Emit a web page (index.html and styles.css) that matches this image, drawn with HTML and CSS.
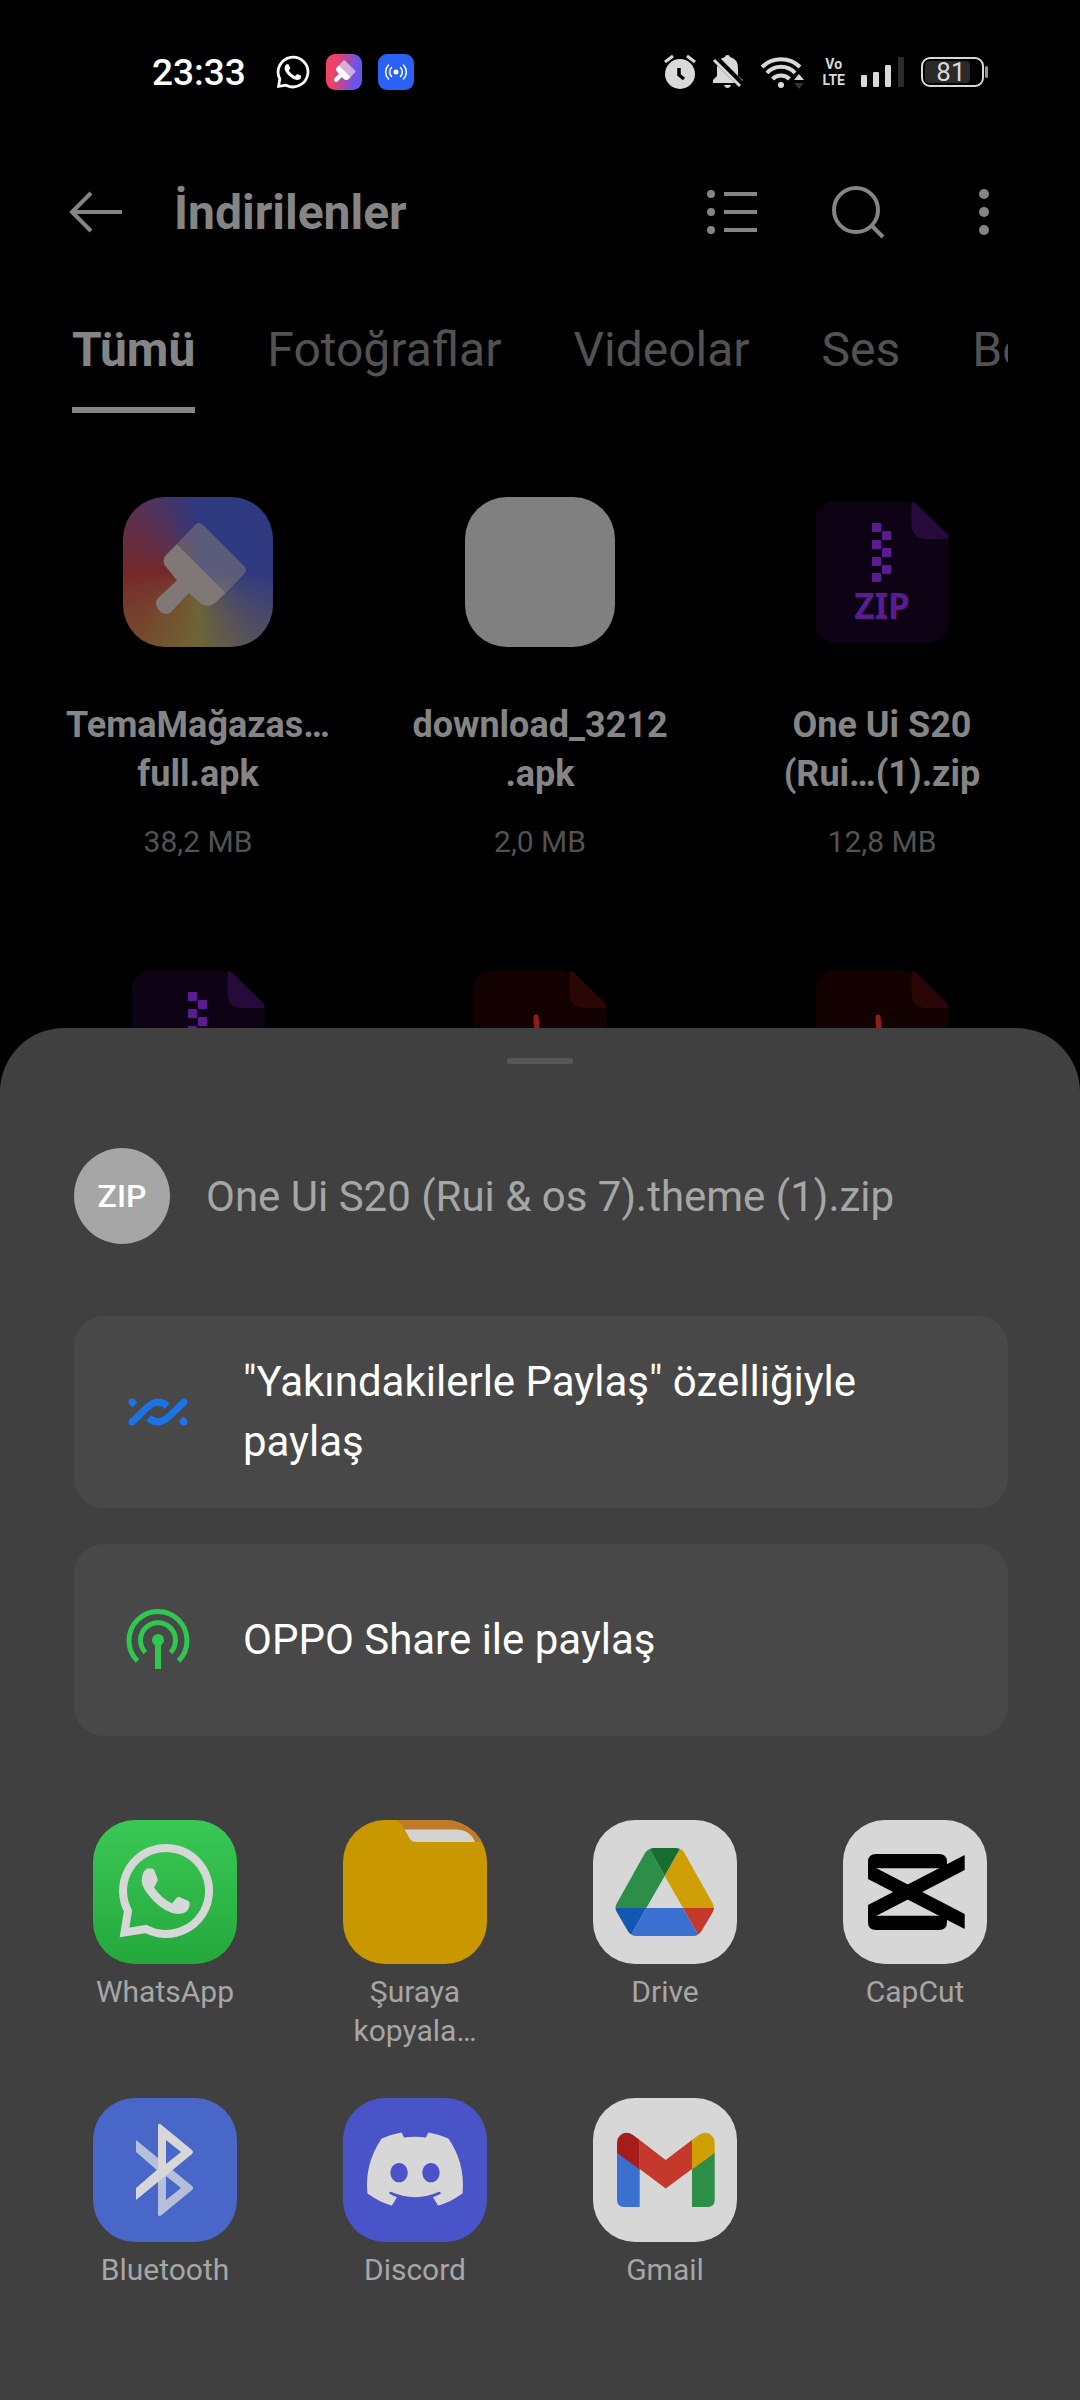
FILE: index.html
```html
<!DOCTYPE html>
<html lang="tr">

<head>
    <meta charset="UTF-8">
    <meta name="viewport" content="width=device-width, initial-scale=1.0">
    <title>İndirilenler</title>
    <link rel="stylesheet" href="styles.css">
</head>

<body>

    <!-- Shared icon shapes -->
    <svg class="sprite" aria-hidden="true">
        <symbol id="whatsapp" viewBox="24 22 98 98">
            <path d="M53 109A43 43 0 1 0 35 91L31.500 112.500Z" fill="none" stroke="currentColor" stroke-width="8" />
            <path d="M54 48.500h5q1.500 0 2 1.500l3.500 8.500q.7 2-.5 3.500l-3 5.500q7 10.500 18 16l4.500-5.500q1.500-1.500 3.500-.7l8.500 3.700q1.500.8 1.200 2.500q-.5 10.500-12 10.500q-12-1-24-13q-12-13-12-19.500q0-10 5.300-13z" fill="currentColor" />
        </symbol>
        <symbol id="brush" viewBox="0 0 150 150">
            <path d="M54 47L72 28q4-4 8 0L121 69q4 4 0 8L102.700 96z" fill="currentColor" opacity=".55" />
            <path d="M54 47L44 57q-7 7 0 14L54 83.500L35 101q-4 5 0 11q6 8 13 3L66 96L77 106q8 6 15 0L102.700 96z" fill="currentColor" />
        </symbol>
        <symbol id="zip-file" viewBox="0 0 150 150">
            <path d="M24 4.500H99.500L141.500 41V131q0 15-15 15H24q-15 0-15-15V19.500q0-15 15-15z" fill="#0d0314" />
            <path d="M104.500 5q3 0 5 2L139 36q2.500 2.500 2.500 6H120q-15.500 0-15.500-15.500z" fill="#270a3c" />
            <g fill="#5b1b93">
                <rect x="65" y="26" width="9" height="9" rx="1" />
                <rect x="75" y="34" width="9" height="9" rx="1" />
                <rect x="65" y="43" width="9" height="9" rx="1" />
                <rect x="75" y="51" width="9" height="9" rx="1" />
                <rect x="65" y="60" width="9" height="9" rx="1" />
                <rect x="75" y="68" width="9" height="9" rx="1" />
                <rect x="65" y="76" width="9" height="9" rx="1" />
            </g>
        </symbol>
        <symbol id="pdf-file" viewBox="0 0 150 150">
            <path d="M24 4.500H99.500L141.500 41V131q0 15-15 15H24q-15 0-15-15V19.500q0-15 15-15z" fill="#140202" />
            <path d="M104.500 5q3 0 5 2L139 36q2.500 2.500 2.500 6H120q-15.500 0-15.500-15.500z" fill="#2b0606" />
            <path d="M71 51C70 80 90 98 108 100C90 92 60 96 45 112C62 104 76 80 71 51z" fill="none" stroke="#8f1d1d" stroke-width="5" stroke-linejoin="round" />
        </symbol>
    </svg>

    <div class="status-bar">
        <div class="status-left">
            <span class="clock">23:33</span>
            <svg class="status-whatsapp"><use href="#whatsapp" /></svg>
            <span class="mini-app theme"><svg><use href="#brush" /></svg></span>
            <span class="mini-app cast">
                <svg viewBox="0 0 36 36" fill="none" stroke="#fff" stroke-width="1.500" stroke-linecap="round">
                    <circle cx="18" cy="18" r="2.500" fill="#fff" stroke="none" />
                    <path d="M13.500 13.500a6.500 6.500 0 0 0 0 9M22.500 13.500a6.500 6.500 0 0 1 0 9M10.500 11a10 10 0 0 0 0 14M25.500 11a10 10 0 0 1 0 14" />
                </svg>
            </span>
        </div>
        <div class="status-right">
            <svg width="32" height="36" viewBox="0 0 32 36">
                <circle cx="16" cy="20" r="15" fill="currentColor" />
                <path d="M1 8L9 2M31 8L23 2" stroke="currentColor" stroke-width="3" />
                <path d="M15 14v7l5 4" fill="none" stroke="#000" stroke-width="3.500" />
            </svg>
            <svg width="32" height="36" viewBox="0 0 32 36">
                <path d="M1 29v-3l4-4v-8q0-9 8-11q0-2 2.500-2t2.500 2q8 2 8 11v8l5 4v3z" fill="currentColor" />
                <path d="M12 31h7q-1 3-3.500 3t-3.500-3z" fill="currentColor" />
                <path d="M4 5L30 31" stroke="#000" stroke-width="7" />
                <path d="M2 6L28 32" stroke="currentColor" stroke-width="3" />
            </svg>
            <svg width="46" height="36" viewBox="0 0 46 36">
                <g fill="none" stroke="currentColor" stroke-width="4">
                    <path d="M2 13a27 27 0 0 1 38 0" />
                    <path d="M7 19a19 19 0 0 1 28 0" />
                    <path d="M12.500 25a12 12 0 0 1 17 0" />
                </g>
                <circle cx="21" cy="31" r="3" fill="currentColor" />
                <path d="M34 26l5-6 5 6z" fill="currentColor" />
                <path d="M34 29h10l-5 6z" fill="#333" />
            </svg>
            <span class="volte">Vo<br>LTE</span>
            <svg width="44" height="32" viewBox="0 0 44 32" fill="currentColor">
                <rect x="0" y="19" width="6" height="12" rx="1" />
                <rect x="12" y="16" width="6" height="15" rx="1" />
                <rect x="24" y="9" width="6" height="22" rx="1" />
                <rect x="37" y="1" width="6" height="30" rx="1" fill="#2a2a2a" />
            </svg>
            <span class="battery"><span class="battery-level">81</span></span>
        </div>
    </div>

    <header class="toolbar">
        <button type="button" aria-label="Geri">
            <svg width="54" height="44" viewBox="0 0 54 44" fill="none" stroke="currentColor" stroke-width="4">
                <path d="M53 22H4M22 3L3 22L22 41" />
            </svg>
        </button>
        <h1>İndirilenler</h1>
        <div class="toolbar-actions">
            <button type="button" aria-label="Liste görünümü">
                <svg width="52" height="48" viewBox="0 0 52 48" fill="currentColor">
                    <circle cx="5" cy="6" r="4" /><circle cx="5" cy="24" r="4" /><circle cx="5" cy="42" r="4" />
                    <path d="M18 4h33v4H18zM18 22h33v4H18zM18 40h33v4H18z" />
                </svg>
            </button>
            <button type="button" aria-label="Ara">
                <svg width="54" height="54" viewBox="0 0 54 54" fill="none" stroke="currentColor" stroke-width="4">
                    <circle cx="25" cy="25" r="22" /><path d="M40 40L52 52" />
                </svg>
            </button>
            <button type="button" aria-label="Diğer">
                <svg width="12" height="48" viewBox="0 0 12 48" fill="currentColor">
                    <circle cx="6" cy="6" r="5" /><circle cx="6" cy="24" r="5" /><circle cx="6" cy="42" r="5" />
                </svg>
            </button>
        </div>
    </header>

    <nav class="tabs">
        <button type="button" class="active">Tümü</button>
        <button type="button">Fotoğraflar</button>
        <button type="button">Videolar</button>
        <button type="button">Ses</button>
        <button type="button">Belgeler</button>
    </nav>

    <main class="files">
        <div class="file">
            <div class="file-icon theme"><svg><use href="#brush" /></svg></div>
            <p class="file-name">TemaMağazas…<br>full.apk</p>
            <p class="file-size">38,2 MB</p>
        </div>
        <div class="file">
            <div class="file-icon blank"></div>
            <p class="file-name">download_3212<br>.apk</p>
            <p class="file-size">2,0 MB</p>
        </div>
        <div class="file">
            <div class="file-icon"><svg><use href="#zip-file" /><text x="75" y="122" class="zip-text">ZIP</text></svg></div>
            <p class="file-name">One Ui S20<br>(Rui…(1).zip</p>
            <p class="file-size">12,8 MB</p>
        </div>
        <div class="file">
            <div class="file-icon"><svg><use href="#zip-file" /></svg></div>
        </div>
        <div class="file">
            <div class="file-icon"><svg><use href="#pdf-file" /></svg></div>
        </div>
        <div class="file">
            <div class="file-icon"><svg><use href="#pdf-file" /></svg></div>
        </div>
    </main>

    <!-- Share sheet -->
    <section class="sheet">
        <div class="handle"></div>
        <div class="sheet-header">
            <span class="file-type">ZIP</span>
            <h2>One Ui S20 (Rui &amp; os 7).theme (1).zip</h2>
        </div>

        <div class="share-options">
            <button type="button">
                <svg viewBox="-3 -19 66 66" fill="none" stroke="#1a73e8" stroke-width="7">
                    <path d="M4 24L19 9.500Q29.500-.5 39.500 8M56 4L41 18.500Q30.500 28.500 20.500 20M4 4l3 3M56 24l-3-3" />
                    <g fill="#1a73e8" stroke="none">
                        <circle cx="4" cy="4" r="3.500" /><circle cx="4" cy="24" r="3.500" />
                        <circle cx="56" cy="4" r="3.500" /><circle cx="56" cy="24" r="3.500" />
                    </g>
                </svg>
                <span>"Yakındakilerle Paylaş" özelliğiyle paylaş</span>
            </button>
            <button type="button">
                <svg viewBox="0 0 66 66" fill="none" stroke="#2fc750" stroke-width="5">
                    <path d="M12.500 54A29 29 0 1 1 53.500 54M20.500 45.500A17.500 17.500 0 1 1 45.500 45.500" />
                    <circle cx="33" cy="33" r="6" fill="#2fc750" stroke="none" />
                    <path d="M33 33V62" stroke-width="6" />
                </svg>
                <span>OPPO Share ile paylaş</span>
            </button>
        </div>

        <div class="apps">
            <button type="button">
                <span class="app-icon whatsapp"><svg viewBox="0 0 144 144"><use href="#whatsapp" x="24" y="22" width="98" height="98" /></svg></span>
                <span>WhatsApp</span>
            </button>
            <button type="button">
                <span class="app-icon folder">
                    <svg viewBox="0 0 144 144">
                        <path d="M52 0q5 1 8 7l7 12q2 3 6 3h71V0z" fill="#bd7b2b" />
                        <path d="M61.500 9.500H113q14 0 19 12.500H73q-4 0-6-3z" fill="#d3d2d0" />
                    </svg>
                </span>
                <span>Şuraya kopyala…</span>
            </button>
            <button type="button">
                <span class="app-icon">
                    <svg viewBox="0 0 144 144">
                        <path d="M56.700 29L71.700 56L53.300 88H22.500q0-3 1.500-5L52 33q2-3 4.700-4z" fill="#2d8f47" />
                        <path d="M56.700 29q2-1 4-1H83q2 0 4 1L71.700 56z" fill="#176e30" />
                        <path d="M87 29q3 1 4.500 4L119.500 83q1.500 2 1.500 5H90L71.700 56z" fill="#d09e05" />
                        <path d="M22.500 88H53.300L38.300 114.500q-2-1-3.500-3.500L24 92.500q-1.500-2-1.500-4.500z" fill="#1457b2" />
                        <path d="M53.300 88H90L105 114.500q-2 1.500-5 1.500H43.500q-3 0-5.200-1.500z" fill="#3a70cf" />
                        <path d="M90 88h31q0 2.500-1.500 4.500L108.500 111q-1.500 2.500-3.500 3.500z" fill="#c4392c" />
                    </svg>
                </span>
                <span>Drive</span>
            </button>
            <button type="button">
                <span class="app-icon">
                    <svg viewBox="0 0 144 144">
                        <path d="M25 59V46l9 2.500L121.700 94V109z" />
                        <path d="M25 85V98l9-2.500L121.700 50V35z" />
                        <path d="M25 52V42q0-8 8-8h63q8 0 8 8v6.300H25z" />
                        <path d="M25 92V102q0 8 8 8h63q8 0 8-8v-6.300H25z" />
                    </svg>
                </span>
                <span>CapCut</span>
            </button>
            <button type="button">
                <span class="app-icon bluetooth">
                    <svg viewBox="0 0 144 144" fill-rule="evenodd">
                        <path d="M65 117q1 2 3 .5L99 92q2-2 0-4L43 42V54L65 73zM73 102V78L88 90z" fill="#b5bfda" />
                        <path d="M65 27q1-2 3-.5L99 52q2 2 0 4L43 102V90L65 71zM73 42V66L88 54z" fill="#d7d7d7" />
                    </svg>
                </span>
                <span>Bluetooth</span>
            </button>
            <button type="button">
                <span class="app-icon discord">
                    <svg viewBox="0 0 144 144">
                        <path transform="translate(24 23) scale(4)" fill="#d7d7d7" d="M20.317 4.3698a19.7913 19.7913 0 00-4.8851-1.5152.0741.0741 0 00-.0785.0371c-.211.3753-.4447.8648-.6083 1.2495-1.8447-.2762-3.68-.2762-5.4868 0-.1636-.3933-.4058-.8742-.6177-1.2495a.077.077 0 00-.0785-.037 19.7363 19.7363 0 00-4.8852 1.515.0699.0699 0 00-.0321.0277C.5334 9.0458-.319 13.5799.0992 18.0578a.0824.0824 0 00.0312.0561c2.0528 1.5076 4.0413 2.4228 5.9929 3.0294a.0777.0777 0 00.0842-.0276c.4616-.6304.8731-1.2952 1.226-1.9942a.076.076 0 00-.0416-.1057c-.6528-.2476-1.2743-.5495-1.8722-.8923a.077.077 0 01-.0076-.1277c.1258-.0943.2517-.1923.3718-.2914a.0743.0743 0 01.0776-.0105c3.9278 1.7933 8.18 1.7933 12.0614 0a.0739.0739 0 01.0785.0095c.1202.099.246.1981.3728.2924a.077.077 0 01-.0066.1276 12.2986 12.2986 0 01-1.873.8914.0766.0766 0 00-.0407.1067c.3604.698.7719 1.3628 1.225 1.9932a.076.076 0 00.0842.0286c1.961-.6067 3.9495-1.5219 6.0023-3.0294a.077.077 0 00.0313-.0552c.5004-5.177-.8382-9.6739-3.5485-13.6604a.061.061 0 00-.0312-.0286zM8.02 15.3312c-1.1825 0-2.1569-1.0857-2.1569-2.419 0-1.3332.9555-2.4189 2.157-2.4189 1.2108 0 2.1757 1.0952 2.1568 2.419 0 1.3332-.9555 2.4189-2.1569 2.4189zm7.9748 0c-1.1825 0-2.1569-1.0857-2.1569-2.419 0-1.3332.9554-2.4189 2.1569-2.4189 1.2108 0 2.1757 1.0952 2.1568 2.419 0 1.3332-.946 2.4189-2.1568 2.4189Z" />
                    </svg>
                </span>
                <span>Discord</span>
            </button>
            <button type="button">
                <span class="app-icon">
                    <svg viewBox="0 0 144 144">
                        <path d="M24 54L46.700 71V109H31q-7 0-7-7z" fill="#3a70cf" />
                        <path d="M121.700 54L99 71V109h15.700q7 0 7-7z" fill="#2d8f47" />
                        <path d="M46.700 42L72.700 62L99 42V71L72.700 90.500L46.700 71z" fill="#c4392c" />
                        <path d="M24 55V45q0-6 5-9t11 1l6.700 5V71.500z" fill="#a61c1a" />
                        <path d="M121.700 55V45q0-6-5-9t-11 1L99 42V71.500z" fill="#d09e05" />
                    </svg>
                </span>
                <span>Gmail</span>
            </button>
        </div>
    </section>

</body>

</html>
```
FILE: styles.css
```css
/* Basic Reset */
* {
    margin: 0;
    padding: 0;
    box-sizing: border-box;
}

body {
    font-family: Roboto, 'Liberation Sans', sans-serif;
    background-color: #000;
    color: #858585;
    height: 100vh;
    overflow: hidden;
}

button {
    background: none;
    border: none;
    color: inherit;
    font: inherit;
    cursor: pointer;
}

svg {
    display: block;
}

.sprite {
    position: absolute;
    width: 0;
    height: 0;
}

/* Status bar */
.status-bar {
    display: flex;
    justify-content: space-between;
    align-items: center;
    height: 144px;
    padding: 0 96px 0 152px;
    color: #d9d9d9;
}

.status-left,
.status-right {
    display: flex;
    align-items: center;
}

.status-left {
    gap: 16px;
    color: #fff;
}

.status-right {
    gap: 16px;
}

.clock {
    font-size: 37px;
    font-weight: 500;
    margin-right: 14px;
}

.status-whatsapp {
    width: 34px;
    height: 34px;
}

.mini-app {
    width: 36px;
    height: 36px;
    border-radius: 9px;
    overflow: hidden;
}

.mini-app svg {
    width: 36px;
    height: 36px;
}

.mini-app.theme {
    background: linear-gradient(100deg, #ee4266 25%, #6a53ea 80%);
}

.mini-app.cast {
    background-color: #2962f5;
}

.volte {
    font-size: 14px;
    font-weight: bold;
    line-height: 16px;
    text-align: center;
}

.battery {
    position: relative;
    width: 63px;
    height: 30px;
    padding: 2px;
    border: 2px solid #d9d9d9;
    border-radius: 9px;
}

.battery::after {
    content: '';
    position: absolute;
    top: 7px;
    right: -6px;
    width: 3px;
    height: 12px;
    border-radius: 2px;
    background-color: #999;
}

.battery-level {
    display: block;
    width: 81%;
    height: 22px;
    border-radius: 4px;
    background-color: #2a2a2a;
    font-size: 26px;
    line-height: 22px;
    text-align: right;
    padding-right: 4px;
}

/* Toolbar */
.toolbar {
    display: flex;
    align-items: center;
    height: 136px;
    padding: 0 33px 0 69px;
}

.toolbar h1 {
    margin-left: 51px;
    font-size: 48px;
    font-weight: bold;
}

.toolbar-actions {
    display: flex;
    align-items: center;
    margin-left: auto;
}

.toolbar-actions button {
    display: flex;
    justify-content: center;
    width: 126px;
}

/* Tabs */
.tabs {
    display: flex;
    gap: 72px;
    margin: 42px 72px 0;
    overflow: hidden;
}

.tabs button {
    flex: none;
    padding-bottom: 29px;
    border-bottom: 6px solid transparent;
    color: #525252;
    font-size: 48px;
    line-height: 56px;
}

.tabs .active {
    color: #858585;
    border-color: #858585;
    font-weight: bold;
}

/* File grid */
.files {
    display: grid;
    grid-template-columns: repeat(3, 1fr);
    row-gap: 106px;
    padding: 84px 27px 0;
    text-align: center;
}

.file-icon {
    width: 150px;
    height: 150px;
    margin: 0 auto;
    border-radius: 42px;
    overflow: hidden;
}

.file-icon svg {
    width: 150px;
    height: 150px;
}

.file-icon.theme {
    color: #7f7876;
    background: conic-gradient(#2f3980 0deg 90deg, #514e62 135deg, #6e6535 180deg, #75482e 225deg, #75292a 270deg, #5a3050 315deg, #2f3980 360deg);
}

.file-icon.blank {
    background-color: #808080;
}

.zip-text {
    fill: #5b1b93;
    font-family: 'Noto Sans', sans-serif;
    font-size: 35px;
    font-weight: bold;
    text-anchor: middle;
}

.file-name {
    margin-top: 54px;
    font-size: 36px;
    font-weight: bold;
    line-height: 49px;
}

.file-size {
    margin-top: 25px;
    color: #525252;
    font-size: 30px;
    line-height: 36px;
}

/* Share sheet */
.sheet {
    position: fixed;
    left: 0;
    right: 0;
    bottom: 0;
    padding: 30px 0 111px;
    border-radius: 64px 64px 0 0;
    background-color: #404040;
    color: #a6a6a6;
}

.handle {
    width: 66px;
    height: 6px;
    margin: 0 auto;
    border-radius: 2px;
    background-color: #565656;
}

.sheet-header {
    display: flex;
    align-items: center;
    gap: 36px;
    padding: 84px 72px 72px 74px;
}

.file-type {
    width: 96px;
    height: 96px;
    border-radius: 50%;
    background-color: #a6a6a6;
    color: #fff;
    font-size: 32px;
    font-weight: 500;
    line-height: 96px;
    text-align: center;
}

.sheet-header h2 {
    font-size: 42px;
    font-weight: normal;
}

.share-options {
    display: flex;
    flex-direction: column;
    gap: 36px;
    padding: 0 72px 0 74px;
}

.share-options button {
    display: flex;
    align-items: center;
    gap: 52px;
    min-height: 192px;
    padding: 36px 51px;
    border-radius: 30px;
    background-color: #484848;
    color: #fff;
    font-size: 42px;
    line-height: 60px;
    text-align: left;
}

.share-options svg {
    flex: none;
    width: 66px;
    height: 66px;
}

.apps {
    display: grid;
    grid-template-columns: repeat(4, 1fr);
    row-gap: 48px;
    padding: 84px 40px 0;
}

.apps button {
    display: flex;
    flex-direction: column;
    align-items: center;
    gap: 8px;
    padding: 0 50px;
    font-size: 30px;
    line-height: 39px;
}

.app-icon {
    width: 144px;
    height: 144px;
    border-radius: 42px;
    background-color: #d7d7d7;
    overflow: hidden;
}

.app-icon.whatsapp {
    color: #d7d7d7;
    background: linear-gradient(#3ac855, #24a83c);
}

.app-icon.folder {
    background-color: #c99700;
}

.app-icon.bluetooth {
    background-color: #4867c8;
}

.app-icon.discord {
    background-color: #4a54c9;
}
```
